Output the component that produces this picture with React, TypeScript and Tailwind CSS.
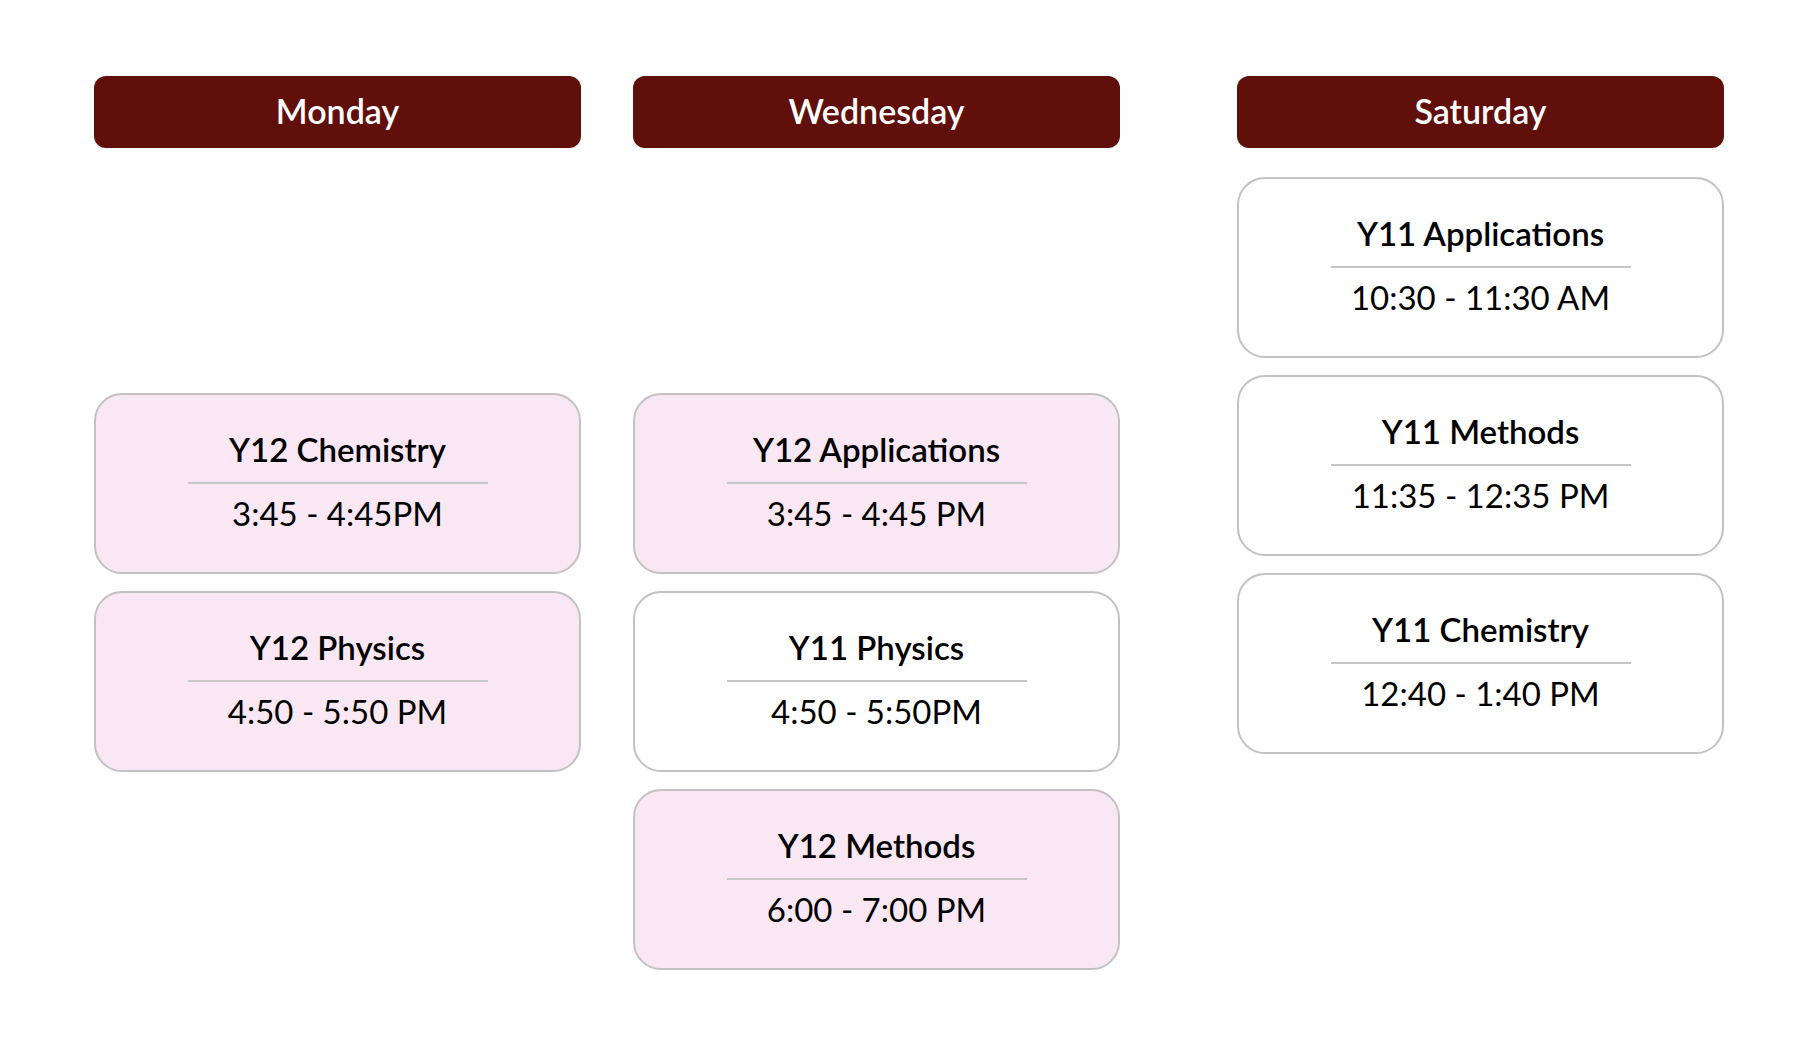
const days = [
  {
    name: "Monday",
    offset: "mt-[245px]",
    gapAfter: "mr-[52px]",
    classes: [
      { title: "Y12 Chemistry", time: "3:45 - 4:45PM", pink: true },
      { title: "Y12 Physics", time: "4:50 - 5:50 PM", pink: true },
    ],
  },
  {
    name: "Wednesday",
    offset: "mt-[245px]",
    gapAfter: "mr-[117px]",
    classes: [
      { title: "Y12 Applications", time: "3:45 - 4:45 PM", pink: true },
      { title: "Y11 Physics", time: "4:50 - 5:50PM", pink: false },
      { title: "Y12 Methods", time: "6:00 - 7:00 PM", pink: true },
    ],
  },
  {
    name: "Saturday",
    offset: "mt-[29px]",
    gapAfter: "",
    classes: [
      { title: "Y11 Applications", time: "10:30 - 11:30 AM", pink: false },
      { title: "Y11 Methods", time: "11:35 - 12:35 PM", pink: false },
      { title: "Y11 Chemistry", time: "12:40 - 1:40 PM", pink: false },
    ],
  },
];

function ClassCard({ title, time, pink }: { title: string; time: string; pink: boolean }) {
  return (
    <div
      className={`h-[181px] rounded-[28px] border-2 border-[#c2c2c2] flex flex-col items-center pt-[34px] ${
        pink ? "bg-[#f9e8f3]" : "bg-white"
      }`}
    >
      <p className="text-[33px] leading-[40px] font-semibold text-black">{title}</p>
      <div className="mt-[13px] h-[2px] w-[300px] bg-[#c6c6c6]" />
      <p className="mt-[9px] text-[33px] leading-[40px] text-black">{time}</p>
    </div>
  );
}

export default function App() {
  return (
    <div
      className="min-h-[1054px] w-full bg-white pt-[76px] pl-[94px] flex items-start"
      style={{ fontFamily: "Lato, 'Open Sans', sans-serif" }}
    >
      {days.map((day) => (
        <div key={day.name} className={`w-[487px] flex flex-col ${day.gapAfter}`}>
          <div className="h-[72px] rounded-[12px] bg-[#600f0b] flex items-center justify-center pb-[4px]">
            <span className="text-[34px] font-semibold text-white">{day.name}</span>
          </div>
          <div className={`flex flex-col gap-[17px] ${day.offset}`}>
            {day.classes.map((c) => (
              <ClassCard key={c.title} title={c.title} time={c.time} pink={c.pink} />
            ))}
          </div>
        </div>
      ))}
    </div>
  );
}
